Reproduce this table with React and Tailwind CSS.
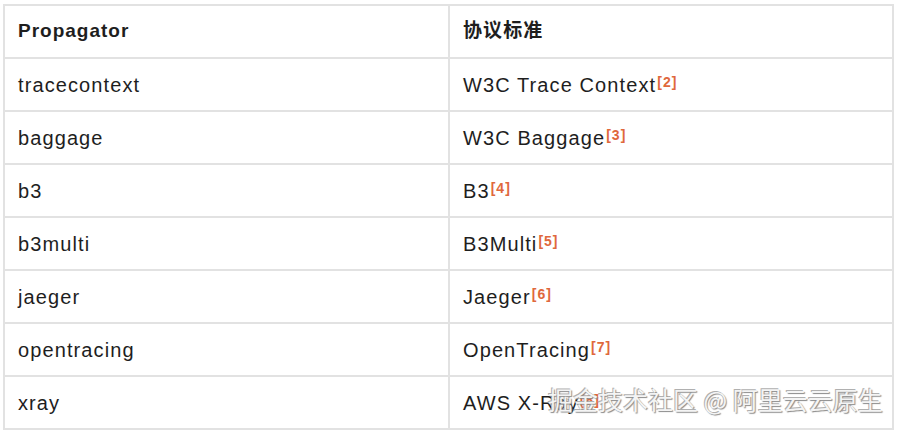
const rows = [
  { name: "tracecontext", spec: "W3C Trace Context", ref: 2 },
  { name: "baggage", spec: "W3C Baggage", ref: 3 },
  { name: "b3", spec: "B3", ref: 4 },
  { name: "b3multi", spec: "B3Multi", ref: 5 },
  { name: "jaeger", spec: "Jaeger", ref: 6 },
  { name: "opentracing", spec: "OpenTracing", ref: 7 },
  { name: "xray", spec: "AWS X-Ray", ref: 8 },
];

const App = () => {
  return (
    <div className="relative w-[900px] h-[432px] bg-white pl-[3px] pt-[4px] font-['Liberation_Sans','Noto_Sans_CJK_SC',sans-serif] text-[#1e1e1e]">
      <table className="w-[891px] border-collapse border-2 border-[#e2e2e2] text-[20px] tracking-[1.1px]">
        <thead>
          <tr className="h-[53px]">
            <th className="w-[445px] border-2 border-[#e2e2e2] px-[13px] text-left text-[19px] font-bold tracking-[1px]">
              Propagator
            </th>
            <th className="border-2 border-[#e2e2e2] px-[13px] text-left text-[19px] font-bold">
              协议标准
            </th>
          </tr>
        </thead>
        <tbody>
          {rows.map((row) => (
            <tr key={row.name} className="h-[53px]">
              <td className="border-2 border-[#e2e2e2] px-[13px]">{row.name}</td>
              <td className="border-2 border-[#e2e2e2] px-[13px]">
                {row.spec}
                <sup className="relative -top-[5px] ml-[1px] text-[14px] font-bold tracking-[1px] text-[#e0683c]">
                  [{row.ref}]
                </sup>
              </td>
            </tr>
          ))}
        </tbody>
      </table>

      <div className="absolute left-[548px] top-[384px] text-[25px] leading-[30px] tracking-normal text-[#f4f4f4] font-['Noto_Sans_CJK_SC',sans-serif] [text-shadow:1px_1px_1px_#8a8a8a,-1px_-1px_0_#b0b0b0]">
        掘金技术社区 @ 阿里云云原生
      </div>
    </div>
  );
};

export default App;
